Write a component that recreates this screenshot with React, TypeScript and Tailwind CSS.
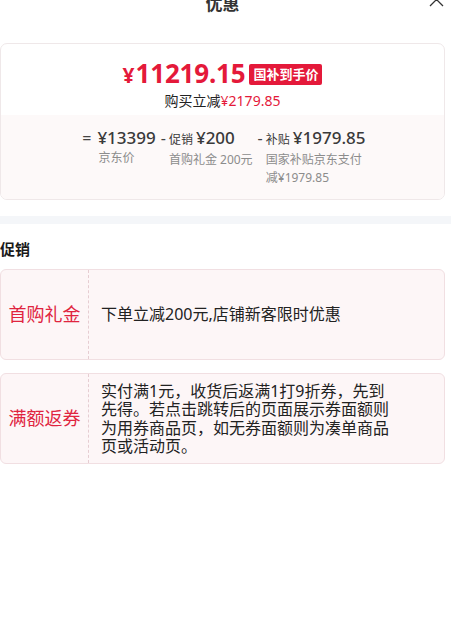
import React from "react";

const font = { fontFamily: '"Noto Sans", "Noto Sans CJK SC", sans-serif' };

const promos = [
  { label: "首购礼金", text: "下单立减200元,店铺新客限时优惠" },
  {
    label: "满额返券",
    text: "实付满1元，收货后返满1打9折券，先到先得。若点击跳转后的页面展示券面额则为用券商品页，如无券面额则为凑单商品页或活动页。",
  },
];

const App = () => {
  return (
    <div className="w-[451px] min-h-[622px] bg-white overflow-hidden" style={font}>
      {/* header, partly scrolled out of view */}
      <div className="relative -mt-[11px] h-[30px] flex items-center justify-center pr-[6px]">
        <span className="text-[17px] font-bold text-[#333]">优惠</span>
        <svg className="absolute right-[7px] top-[3px] w-[15px] h-[15px]" viewBox="0 0 15 15" fill="none">
          <path d="M1 1l13 13M14 1L1 14" stroke="#333" strokeWidth="1.3" />
        </svg>
      </div>

      <div className="pr-[6px] mt-[24px]">
        <div className="border border-[#efe8e9] rounded-[7px] overflow-hidden bg-white">
          <div className="pt-[12px] pb-[5px] flex flex-col items-center">
            <div className="h-[34px] flex items-center gap-[4px]">
              <span className="text-[#e4193a] font-bold leading-none flex items-baseline">
                <span className="text-[21px] mr-[1px]">¥</span>
                <span className="text-[26px] tracking-[-0.2px]">11219.15</span>
              </span>
              <span className="bg-[#e4193a] text-white text-[13px] font-bold leading-[21px] px-[4px] rounded-[2px] mt-[2px]">
                国补到手价
              </span>
            </div>
            <div className="h-[20px] flex items-center text-[14px]">
              <span className="text-[#222]">购买立减</span>
              <span className="text-[#e4193a]">¥2179.85</span>
            </div>
          </div>

          <div className="bg-[#fdf9f9] pt-[12px] pb-[12px] flex justify-center gap-[5px]">
            <div className="flex">
              <span className="text-[16px] leading-[22px] text-[#444] mr-[6px]">=</span>
              <div>
                <div className="text-[17px] leading-[22px] font-medium text-[#3a3a3a]">¥13399</div>
                <div className="text-[12px] leading-[17px] text-[#8c8c8c] pl-[1px]">京东价</div>
              </div>
            </div>
            <div className="flex">
              <span className="text-[16px] leading-[22px] text-[#444] mr-[3px]">-</span>
              <div>
                <div className="leading-[22px] text-[#3a3a3a] flex items-baseline">
                  <span className="text-[12px] mr-[3px]">促销</span>
                  <span className="text-[17px] font-medium">¥200</span>
                </div>
                <div className="text-[12px] leading-[17px] text-[#8c8c8c]">首购礼金 200元</div>
              </div>
            </div>
            <div className="flex">
              <span className="text-[16px] leading-[22px] text-[#444] mr-[3px]">-</span>
              <div className="w-[97px]">
                <div className="leading-[22px] text-[#3a3a3a] flex items-baseline whitespace-nowrap">
                  <span className="text-[12px] mr-[3px]">补贴</span>
                  <span className="text-[17px] font-medium">¥1979.85</span>
                </div>
                <div className="text-[12px] leading-[18px] text-[#8c8c8c]">国家补贴京东支付减¥1979.85</div>
              </div>
            </div>
          </div>
        </div>
      </div>

      <div className="mt-[16px] h-[8px] bg-[#f4f6f9]" />

      <div className="pr-[6px] pt-[15px]">
        <div className="text-[15px] leading-[20px] font-bold text-[#1a1a1a]">促销</div>
        <div className="mt-[10px] flex flex-col gap-[13px]">
          {promos.map((p) => (
            <div
              key={p.label}
              className="h-[91px] flex border border-[#f1dfe2] rounded-[6px] bg-[#fdf6f7]"
            >
              <div className="w-[88px] shrink-0 flex items-center justify-center border-r border-dashed border-[#e6cdd2] text-[18px] text-[#e0243f]">
                {p.label}
              </div>
              <div className="flex items-center pl-[12px]">
                <div className="w-[292px] text-[16px] leading-[18.5px] text-[#222]">{p.text}</div>
              </div>
            </div>
          ))}
        </div>
      </div>
    </div>
  );
};

export default App;
